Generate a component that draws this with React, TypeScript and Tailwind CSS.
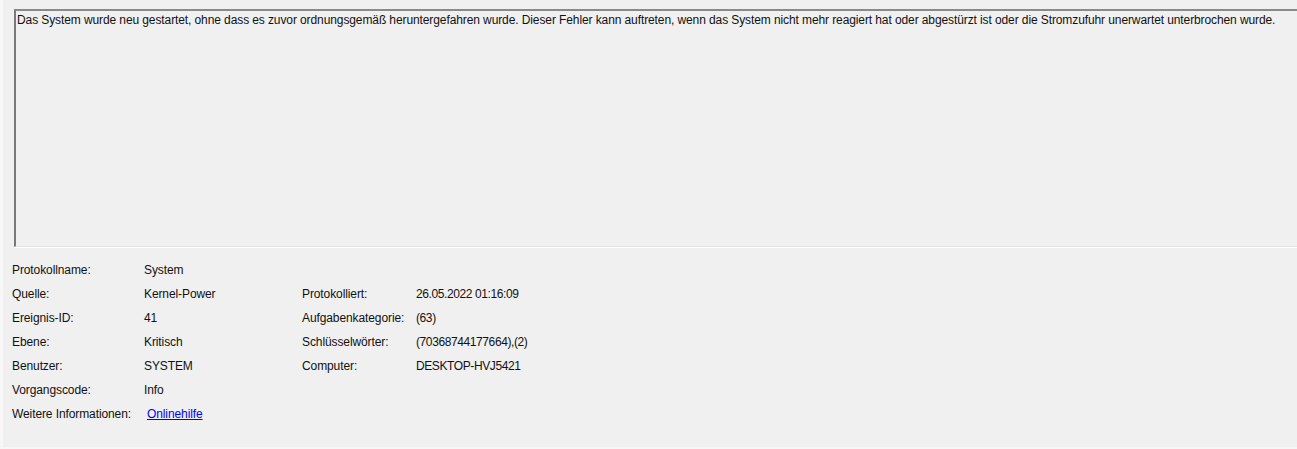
const rows: [string, string, string?, string?][] = [
  ['Protokollname:', 'System'],
  ['Quelle:', 'Kernel-Power', 'Protokolliert:', '26.05.2022 01:16:09'],
  ['Ereignis-ID:', '41', 'Aufgabenkategorie:', '(63)'],
  ['Ebene:', 'Kritisch', 'Schlüsselwörter:', '(70368744177664),(2)'],
  ['Benutzer:', 'SYSTEM', 'Computer:', 'DESKTOP-HVJ5421'],
  ['Vorgangscode:', 'Info'],
];

export default function App() {
  return (
    <div
      className="w-[1297px] h-[449px] overflow-hidden bg-[#f7f7f7] text-[12px] tracking-[-0.1px] text-[#111]"
      style={{ fontFamily: '"Liberation Sans", Arial, sans-serif' }}
    >
      <div className="ml-[3px] h-[447px] bg-[#f0f0f0] pt-[9px]">
        <div className="ml-[11px] w-[1300px] h-[238px] border-t-2 border-l-2 border-t-[#8a8a8a] border-l-[#7a7a7a] border-b border-b-[#e3e3e3] shadow-[0_1px_0_#ffffff] bg-[#f0f0f0]">
          <p className="pl-[1px] pt-[2px] leading-[15px]">
            Das System wurde neu gestartet, ohne dass es zuvor ordnungsgemäß heruntergefahren wurde. Dieser Fehler kann auftreten, wenn das System nicht mehr reagiert hat oder abgestürzt ist oder die Stromzufuhr unerwartet unterbrochen wurde.
          </p>
        </div>
        <div className="mt-[11px] pl-[9px]">
          {rows.map(([l1, v1, l2, v2]) => (
            <div key={l1} className="grid grid-cols-[132px_158px_114px_1fr] h-[24px] items-center">
              <span>{l1}</span>
              <span>{v1}</span>
              <span>{l2 ?? ''}</span>
              <span className="tracking-[-0.4px]">{v2 ?? ''}</span>
            </div>
          ))}
          <div className="grid grid-cols-[132px_1fr] h-[24px] items-center">
            <span>Weitere Informationen:</span>
            <a href="#" className="pl-[3px] text-[#0000ff] underline">Onlinehilfe</a>
          </div>
        </div>
      </div>
    </div>
  );
}
